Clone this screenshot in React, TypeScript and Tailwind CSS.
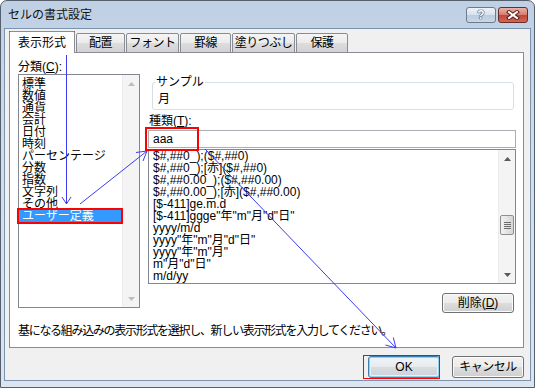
import React from "react";

const FONT = "font-['Liberation_Sans','Noto_Sans_CJK_JP',sans-serif]";

function Tri({ dir, color }: { dir: "up" | "down"; color: string }) {
  return (
    <svg width="7" height="4" viewBox="0 0 7 4">
      <polygon points={dir === "up" ? "0,4 7,4 3.5,0" : "0,0 7,0 3.5,4"} fill={color} />
    </svg>
  );
}

function VScroll({ disabled, thumb }: { disabled?: boolean; thumb?: boolean }) {
  const c = disabled ? "#bdbdbd" : "#5a5a5a";
  return (
    <div className="w-[17px] h-full flex flex-col bg-[#f4f4f4] border-l border-[#ececec]">
      <div className="h-[17px] flex items-center justify-center">
        <Tri dir="up" color={c} />
      </div>
      <div className="flex-1 flex flex-col">
        {thumb && (
          <div className="mt-[48px] mx-[1px] h-[20px] rounded-[2px] border border-[#8e8f8f] bg-[linear-gradient(90deg,#f3f3f3,#e3e3e3_50%,#d6d6d6)] flex flex-col items-center justify-center gap-[1px]">
            <div className="w-[7px] h-[1px] bg-[#6e6e6e]" />
            <div className="w-[7px] h-[1px] bg-[#6e6e6e]" />
            <div className="w-[7px] h-[1px] bg-[#6e6e6e]" />
            <div className="w-[7px] h-[1px] bg-[#6e6e6e]" />
          </div>
        )}
      </div>
      <div className="h-[17px] flex items-center justify-center">
        <Tri dir="down" color={c} />
      </div>
    </div>
  );
}

const categories = [
  "標準",
  "数値",
  "通貨",
  "会計",
  "日付",
  "時刻",
  "パーセンテージ",
  "分数",
  "指数",
  "文字列",
  "その他",
  "ユーザー定義",
];

const formats = [
  "$#,##0_);($#,##0)",
  "$#,##0_);[赤]($#,##0)",
  "$#,##0.00_);($#,##0.00)",
  "$#,##0.00_);[赤]($#,##0.00)",
  "[$-411]ge.m.d",
  '[$-411]ggge"年"m"月"d"日"',
  "yyyy/m/d",
  'yyyy"年"m"月"d"日"',
  'yyyy"年"m"月"',
  'm"月"d"日"',
  "m/d/yy",
];

const tabs = [
  { label: "配置", w: "w-[49px]" },
  { label: "フォント", w: "w-[53px]" },
  { label: "罫線", w: "w-[51px]" },
  { label: "塗りつぶし", w: "w-[63px]" },
  { label: "保護", w: "w-[52px]" },
];

const BTN =
  "rounded-[3px] border border-[#707070] bg-[linear-gradient(#f2f2f2_0%,#ebebeb_49%,#dddddd_50%,#cfcfcf_100%)] shadow-[inset_0_0_0_1px_#fbfbfb] flex items-center justify-center";

export default function App() {
  return (
    <div className={`relative w-[535px] h-[388px] bg-white text-[12px] leading-[12px] text-black ${FONT}`}>
      <div className="w-full h-full flex flex-col rounded-t-[7px] border border-[#56606c] bg-[linear-gradient(#bfd0e4,#d0dded_40%,#dae5f1)] px-[3px] pb-[6px]">
        {/* title bar */}
        <div className="h-[27px] flex items-start justify-between pl-[4px] pr-[3px]">
          <span className="mt-[8px] text-[#111]">セルの書式設定</span>
          <div className="mt-[6px] flex gap-[2px]">
            <div className="w-[30px] h-[16px] rounded-[3px] border border-[#6b7a8d] bg-[linear-gradient(#eef3f9,#d6e1ee_50%,#bccbdd_51%,#c9d8e9)] flex items-center justify-center">
              <span className="text-white font-bold text-[12px] leading-[12px] [text-shadow:0_0_1px_#2c3a4c,0_0_1px_#2c3a4c,0_0_1px_#2c3a4c]">?</span>
            </div>
            <div className="w-[30px] h-[16px] rounded-[3px] border border-[#6a2d26] bg-[linear-gradient(#eab3a8,#d77a6c_50%,#c1443a_51%,#d0685a)] flex items-center justify-center">
              <svg width="14" height="10" viewBox="0 0 14 10">
                <g strokeLinecap="square">
                  <line x1="3" y1="2" x2="11" y2="8" stroke="#5a1c16" strokeWidth="4" />
                  <line x1="11" y1="2" x2="3" y2="8" stroke="#5a1c16" strokeWidth="4" />
                  <line x1="3" y1="2" x2="11" y2="8" stroke="#ffffff" strokeWidth="2" />
                  <line x1="11" y1="2" x2="3" y2="8" stroke="#ffffff" strokeWidth="2" />
                </g>
              </svg>
            </div>
          </div>
        </div>

        {/* client */}
        <div className="flex-1 flex flex-col bg-[#f0f0f0] border border-[#7d93ad] pl-[4px] pr-[6px] pt-[2px]">
          {/* tabs */}
          <div className="h-[22px] flex items-end gap-[1px] relative z-10">
            <div className="w-[66px] h-[22px] bg-white border border-b-0 border-[#898c95] rounded-t-[2px] flex items-center justify-center">
              表示形式
            </div>
            {tabs.map((t) => (
              <div
                key={t.label}
                className={`${t.w} h-[20px] border border-[#898c95] rounded-t-[2px] bg-[linear-gradient(#f5f5f5,#ebebeb_50%,#dddddd_51%,#d2d2d2)] flex items-center justify-center tracking-[-0.5px]`}
              >
                {t.label}
              </div>
            ))}
          </div>

          {/* panel */}
          <div className="-mt-[1px] h-[296px] bg-white border border-[#898c95] flex flex-col pt-[8px] pl-[8px]">
            <div className="flex gap-[8px]">
              {/* left column */}
              <div className="w-[122px] flex flex-col">
                <div className="h-[12px]">
                  分類(<span className="underline">C</span>):
                </div>
                <div className="mt-[1px] h-[234px] border border-[#828790] flex">
                  <div className="flex-1 flex flex-col pt-[3px]">
                    {categories.map((c, i) =>
                      i === categories.length - 1 ? (
                        <div key={c} className="h-[12px] pl-[3px] bg-[#3399ff] text-white">
                          {c}
                        </div>
                      ) : (
                        <div key={c} className="h-[12px] pl-[3px]">
                          {c}
                        </div>
                      )
                    )}
                  </div>
                  <VScroll disabled />
                </div>
              </div>

              {/* right column */}
              <div className="w-[368px] flex flex-col pt-[14px]">
                <fieldset className="ml-[4px] mr-[2px] border border-[#d5dfe5] rounded-[3px] pl-[2px] pb-[4px]">
                  <legend className="leading-[14px] px-[1px]">サンプル</legend>
                  <div className="pt-[4px] pl-[3px]">月</div>
                </fieldset>
                <div className="mt-[5px] ml-[1px] h-[12px]">
                  種類(<span className="underline">T</span>):
                </div>
                <div className="mt-[3px] h-[18px] border border-[#abadb3] flex items-center pl-[4px]">aaa</div>
                <div className="mt-[1px] h-[135px] border border-[#828790] flex">
                  <div className="flex-1 flex flex-col pl-[4px]">
                    {formats.map((f) => (
                      <div key={f} className="h-[12px] whitespace-nowrap">
                        {f}
                      </div>
                    ))}
                  </div>
                  <VScroll thumb />
                </div>
                <div className={`mt-[9px] mr-[2px] self-end w-[72px] h-[20px] ${BTN}`}>
                  削除(<span className="underline">D</span>)
                </div>
              </div>
            </div>
            <div className="mt-[12px] whitespace-nowrap tracking-[-1.3px]">
              基になる組み込みの表示形式を選択し、新しい表示形式を入力してください。
            </div>
          </div>

          {/* bottom buttons */}
          <div className="mt-[8px] flex justify-end gap-[12px]">
            <div className="w-[72px] h-[22px] rounded-[3px] border border-[#3c7fb1] bg-[linear-gradient(#f2f4f6,#e8ebee_49%,#d8dde2_50%,#cdd3d9_100%)] shadow-[inset_0_0_0_1px_#8fd3f0,inset_0_0_0_2px_#e4f3fa] flex items-center justify-center">
              OK
            </div>
            <div className={`w-[72px] h-[22px] tracking-[-0.5px] ${BTN}`}>キャンセル</div>
          </div>
        </div>
      </div>

      {/* annotations */}
      <svg className="absolute inset-0 pointer-events-none" width="535" height="388" viewBox="0 0 535 388">
        <g stroke="#3b3bf2" strokeWidth="1" fill="none">
          <line x1="66.5" y1="55" x2="66.5" y2="204" />
          <polyline points="62,197 66.5,204 71,197" />
          <line x1="80" y1="204" x2="147" y2="151" />
          <polyline points="136,152.5 147,151 143,161" />
          <line x1="205" y1="149" x2="396" y2="348" />
          <polyline points="385.5,345 396,348 393.3,337.5" />
        </g>
        <g stroke="#ff0000" fill="none">
          <rect x="10" y="32" width="64" height="20" strokeWidth="2" />
          <rect x="18" y="209" width="104" height="14" strokeWidth="2" />
          <rect x="146" y="128" width="52" height="22" strokeWidth="2" />
          <rect x="363.5" y="355.5" width="76" height="23" strokeWidth="1" />
        </g>
      </svg>
    </div>
  );
}
